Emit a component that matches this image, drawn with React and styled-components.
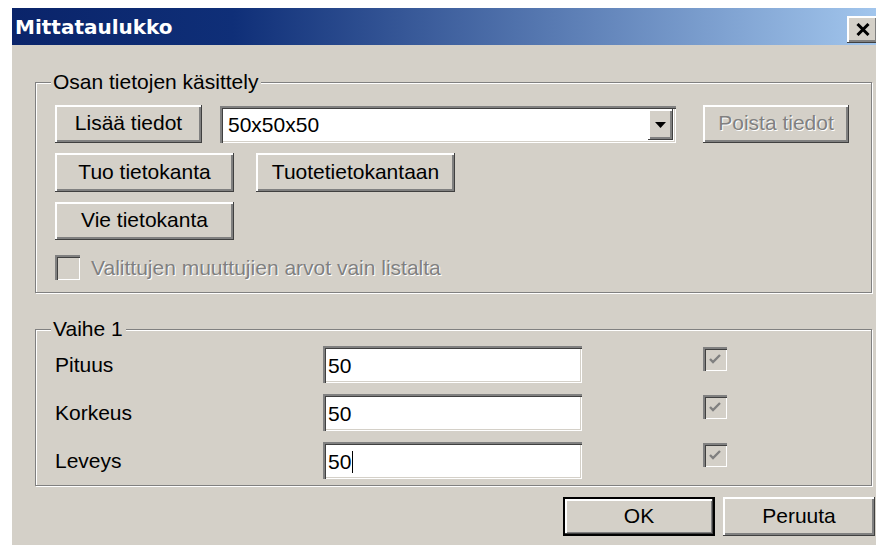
import React from 'react';
import styled, { createGlobalStyle, css } from 'styled-components';

const Global = createGlobalStyle`
  html, body { margin: 0; padding: 0; background: #fff; overflow: hidden; }
  body { font-family: "Liberation Sans", Arial, sans-serif; }
`;

const face = '#d4d0c8';

const Window = styled.div`
  margin: 8px 0 0 12px;
  width: 883px;
  height: 537px;
  background: ${face};
  display: flex;
  flex-direction: column;
`;

const TitleBar = styled.div`
  height: 37px;
  display: flex;
  align-items: center;
  justify-content: space-between;
  padding: 0 17px 0 3px;
  background: linear-gradient(to right, #0a246a 0%, #0f2f78 25%, #a6caf0 100%);
`;

const Title = styled.span`
  font-family: "DejaVu Sans", Verdana, sans-serif;
  font-weight: bold;
  font-size: 20px;
  color: #fff;
`;

const raised = css`
  background: ${face};
  border: none;
  box-shadow: inset -1px -1px #404040, inset 2px 2px #fff, inset -3px -3px #808080;
`;

const sunken = css`
  box-shadow: inset 2px 2px #808080, inset 3px 3px #404040, inset -1px -1px #fff, inset -2px -2px ${face};
`;

const CloseButton = styled.div`
  ${raised};
  width: 31px;
  height: 27px;
  margin-top: 6px;
  display: flex;
  align-items: center;
  justify-content: center;
`;

const Body = styled.div`
  flex: 1;
  padding: 25px 23px 0 23px;
  display: flex;
  flex-direction: column;
  font-size: 21px;
  color: #000;
`;

const Group = styled.fieldset`
  margin: ${p => p.$top || 0}px 0 0 0;
  padding: ${p => p.$pad};
  border: 1px solid #808080;
  box-shadow: inset 1px 1px #fff, 1px 1px #fff;
  min-inline-size: 0;
`;

const Legend = styled.legend`
  margin-left: -4px;
  padding: 0 3px 0 2px;
  line-height: 24px;
  background: ${face};
`;

const Stack = styled.div`
  display: flex;
  flex-direction: column;
  gap: 10px;
`;

const Row = styled.div`
  display: flex;
  align-items: center;
  gap: ${p => p.$gap || 0}px;
`;

const Button = styled.button`
  ${raised};
  font-family: inherit;
  font-size: 21px;
  color: ${p => (p.disabled ? '#808080' : '#000')};
  text-shadow: ${p => (p.disabled ? '1px 1px #fff' : 'none')};
  width: ${p => p.$w}px;
  height: ${p => p.$h || 38}px;
  padding: 0 0 2px 0;
  ${p => p.$default && css`
    outline: 2px solid #000;
    outline-offset: -2px;
    box-shadow: inset -3px -3px #404040, inset 4px 4px #fff, inset -4px -4px #808080;
  `}
`;

const Combo = styled.div`
  ${sunken};
  background: #fff;
  width: 456px;
  height: 37px;
  box-sizing: border-box;
  display: flex;
  align-items: center;
  justify-content: space-between;
  padding: 3px 3px 2px 8px;
`;

const DropButton = styled.div`
  ${raised};
  width: 25px;
  height: 31px;
  display: flex;
  align-items: center;
  justify-content: center;
`;

const Check = styled.div`
  ${sunken};
  width: ${p => p.$size}px;
  height: ${p => p.$size}px;
  background: ${face};
  flex: none;
  display: flex;
  align-items: center;
  justify-content: center;
`;

const DisabledText = styled.span`
  color: #808080;
  text-shadow: 1px 1px #fff;
`;

const Fields = styled.div`
  display: grid;
  grid-template-columns: 268px 259px 121px 24px;
  row-gap: 11px;
  align-items: center;
`;

const Label = styled.span``;

const Field = styled.div`
  ${sunken};
  background: #fff;
  height: 37px;
  box-sizing: border-box;
  padding: 3px 0 0 5px;
  display: flex;
  align-items: center;
`;

const Caret = styled.span`
  display: inline-block;
  width: 1px;
  height: 22px;
  background: #000;
  margin-left: 1px;
`;

const BoxCell = styled.div`
  grid-column: 4;
  align-self: start;
  margin-top: 1px;
`;

const Footer = styled.div`
  display: flex;
  justify-content: flex-end;
  gap: 8px;
  margin-top: 11px;
  margin-right: -3px;
`;

const Tick = () => (
  <svg width="14" height="12" viewBox="0 0 14 12">
    <path d="M2 6 L5 9 L12 2" fill="none" stroke="#808080" strokeWidth="2.4" />
  </svg>
);

const rows = [
  { label: 'Pituus', value: '50' },
  { label: 'Korkeus', value: '50' },
  { label: 'Leveys', value: '50', focus: true },
];

export default function App() {
  return (
    <>
      <Global />
      <Window>
        <TitleBar>
          <Title>Mittataulukko</Title>
          <CloseButton>
            <svg width="14" height="13" viewBox="0 0 14 13">
              <path d="M1.5 1 L12.5 12 M12.5 1 L1.5 12" stroke="#000" strokeWidth="3" />
            </svg>
          </CloseButton>
        </TitleBar>
        <Body>
          <Group $pad="11px 22px 12px 19px">
            <Legend>Osan tietojen käsittely</Legend>
            <Stack>
              <Row>
                <Button $w={147}>Lisää tiedot</Button>
                <Row style={{ marginLeft: 18, marginRight: 27 }}>
                  <Combo>
                    <span>50x50x50</span>
                    <DropButton>
                      <svg width="11" height="6" viewBox="0 0 11 6">
                        <path d="M0 0 H11 L5.5 6 Z" fill="#000" />
                      </svg>
                    </DropButton>
                  </Combo>
                </Row>
                <Button $w={146} disabled>Poista tiedot</Button>
              </Row>
              <Row $gap={22}>
                <Button $w={179} $h={39}>Tuo tietokanta</Button>
                <Button $w={199} $h={39}>Tuotetietokantaan</Button>
              </Row>
              <Row>
                <Button $w={179}>Vie tietokanta</Button>
              </Row>
              <Row $gap={11} style={{ marginTop: 5 }}>
                <Check $size={25} />
                <DisabledText>Valittujen muuttujien arvot vain listalta</DisabledText>
              </Row>
            </Stack>
          </Group>

          <Group $top={24} $pad="5px 22px 6px 19px">
            <Legend>Vaihe 1</Legend>
            <Fields>
              {rows.map(r => (
                <React.Fragment key={r.label}>
                  <Label>{r.label}</Label>
                  <Field>
                    {r.value}
                    {r.focus && <Caret />}
                  </Field>
                  <BoxCell>
                    <Check $size={24}>
                      <Tick />
                    </Check>
                  </BoxCell>
                </React.Fragment>
              ))}
            </Fields>
          </Group>

          <Footer>
            <Button $w={152} $h={39} $default>OK</Button>
            <Button $w={152} $h={39}>Peruuta</Button>
          </Footer>
        </Body>
      </Window>
    </>
  );
}
